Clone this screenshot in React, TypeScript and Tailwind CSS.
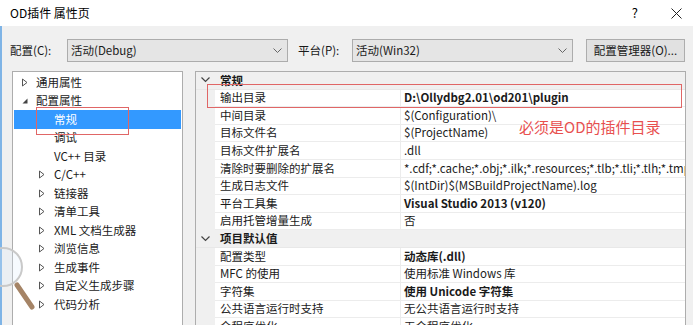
import React from "react";

type Prop = { name: string; value?: string; bold?: boolean; header?: boolean };

const props: Prop[] = [
  { name: "常规", header: true },
  { name: "输出目录", value: "D:\\Ollydbg2.01\\od201\\plugin", bold: true },
  { name: "中间目录", value: "$(Configuration)\\" },
  { name: "目标文件名", value: "$(ProjectName)" },
  { name: "目标文件扩展名", value: ".dll" },
  { name: "清除时要删除的扩展名", value: "*.cdf;*.cache;*.obj;*.ilk;*.resources;*.tlb;*.tli;*.tlh;*.tmp;*.rsp;*.pgc;*.pgd;$(TargetPath)" },
  { name: "生成日志文件", value: "$(IntDir)$(MSBuildProjectName).log" },
  { name: "平台工具集", value: "Visual Studio 2013 (v120)", bold: true },
  { name: "启用托管增量生成", value: "否" },
  { name: "项目默认值", header: true },
  { name: "配置类型", value: "动态库(.dll)", bold: true },
  { name: "MFC 的使用", value: "使用标准 Windows 库" },
  { name: "字符集", value: "使用 Unicode 字符集", bold: true },
  { name: "公共语言运行时支持", value: "无公共语言运行时支持" },
  { name: "全程序优化", value: "无全程序优化" },
];

type Node = { label: string; level: 0 | 1; arrow?: "open" | "closed"; selected?: boolean };

const tree: Node[] = [
  { label: "通用属性", level: 0, arrow: "closed" },
  { label: "配置属性", level: 0, arrow: "open" },
  { label: "常规", level: 1, selected: true },
  { label: "调试", level: 1 },
  { label: "VC++ 目录", level: 1 },
  { label: "C/C++", level: 1, arrow: "closed" },
  { label: "链接器", level: 1, arrow: "closed" },
  { label: "清单工具", level: 1, arrow: "closed" },
  { label: "XML 文档生成器", level: 1, arrow: "closed" },
  { label: "浏览信息", level: 1, arrow: "closed" },
  { label: "生成事件", level: 1, arrow: "closed" },
  { label: "自定义生成步骤", level: 1, arrow: "closed" },
  { label: "代码分析", level: 1, arrow: "closed" },
];

function Arrow({ kind }: { kind: "open" | "closed" }) {
  if (kind === "open") {
    return (
      <svg width="8" height="8" viewBox="0 0 8 8">
        <path d="M6.5 1.5 L6.5 6.5 L1.5 6.5 Z" fill="#444" />
      </svg>
    );
  }
  return (
    <svg width="8" height="9" viewBox="0 0 8 9">
      <path d="M1.5 1 L6 4.5 L1.5 8 Z" fill="none" stroke="#555" strokeWidth="1" />
    </svg>
  );
}

function Combo({ text, width }: { text: string; width: string }) {
  return (
    <div className={`${width} h-[23px] border border-[#acacac] bg-[#e5e5e5] flex items-center justify-between pl-[3px] pr-[5px]`}>
      <span>{text}</span>
      <svg width="9" height="6" viewBox="0 0 9 6">
        <path d="M0.5 0.5 L4.5 4.5 L8.5 0.5" fill="none" stroke="#666" strokeWidth="1" />
      </svg>
    </div>
  );
}

export default function App() {
  return (
    <div className="relative w-[693px] h-[325px] overflow-hidden bg-[#f0f0f0] text-[11.5px] text-[#1a1a1a] font-['Noto_Sans_CJK_SC',sans-serif]">
      {/* title bar */}
      <div className="h-[26px] bg-white flex items-center justify-between pl-[10px] pr-[11px]">
        <span className="text-[12px] text-black">OD插件 属性页</span>
        <div className="flex items-center gap-[33px] text-black">
          <span className="text-[13px]">?</span>
          <svg width="11" height="11" viewBox="0 0 11 11">
            <path d="M0.5 0.5 L10.5 10.5 M10.5 0.5 L0.5 10.5" stroke="#222" strokeWidth="1" />
          </svg>
        </div>
      </div>

      {/* config row */}
      <div className="flex items-center mt-[13px] pl-[10px]">
        <span className="w-[57px]">配置(C):</span>
        <Combo text="活动(Debug)" width="w-[221px]" />
        <span className="ml-[10px] w-[54px]">平台(P):</span>
        <Combo text="活动(Win32)" width="w-[221px]" />
        <div className="ml-[13px] w-[99px] h-[23px] border border-[#adadad] bg-[#e1e1e1] flex items-center justify-center">
          配置管理器(O)...
        </div>
      </div>

      {/* panels */}
      <div className="flex mt-[9px] pl-[12px] gap-[12px]">
        {/* tree */}
        <div className="w-[171px] h-[270px] bg-white border border-[#adadad] pt-[1px]">
          {tree.map((n) => (
            <div
              key={n.label}
              className={`h-[18.5px] ml-[1px] mr-[1px] flex items-center text-[11.5px] ${n.selected ? "bg-[#3399ff] text-white" : ""}`}
            >
              <div className={`flex items-center justify-center w-[8px] ${n.level === 0 ? "ml-[7px] mr-[7px]" : "ml-[24px] mr-[8px]"}`}>
                {n.arrow && <Arrow kind={n.arrow} />}
              </div>
              <span>{n.label}</span>
            </div>
          ))}
        </div>

        {/* property grid */}
        <div className="w-[491px] h-[270px] bg-white border border-[#adadad] overflow-hidden">
          {props.map((p) =>
            p.header ? (
              <div key={p.name} className="h-[17.6px] bg-[#f0f0f0] flex items-center border-b border-[#e8e8e8]">
                <div className="w-[19px] flex justify-center">
                  <svg width="9" height="6" viewBox="0 0 9 6">
                    <path d="M0.5 0.5 L4.5 4.5 L8.5 0.5" fill="none" stroke="#444" strokeWidth="1.2" />
                  </svg>
                </div>
                <span className="pl-[5px] font-bold">{p.name}</span>
              </div>
            ) : (
              <div key={p.name} className="h-[17.6px] flex">
                <div className="w-[19px] bg-[#f0f0f0]" />
                <div className="w-[186px] pl-[5px] flex items-center border-b border-r border-[#ececec] whitespace-nowrap">
                  {p.name}
                </div>
                <div className={`flex-1 pl-[3px] flex items-center border-b border-[#ececec] whitespace-nowrap overflow-hidden ${p.bold ? "font-bold" : ""}`}>
                  {p.value}
                </div>
              </div>
            )
          )}
        </div>
      </div>

      {/* annotations */}
      <div className="absolute left-[36px] top-[107px] w-[93px] h-[28px] border border-[#e06666]" />
      <div className="absolute left-[207px] top-[84px] w-[475px] h-[24px] border border-[#e06666]" />
      <div className="absolute left-[519px] top-[116px] text-[15px] text-[#e8504f]">必须是OD的插件目录</div>

      {/* window edge + magnifier */}
      <div className="absolute left-0 top-[26px] w-[2px] h-[299px] bg-[#7fb4e6]" />
      <svg className="absolute left-0 top-[244px]" width="40" height="70" viewBox="0 0 40 70">
        <circle cx="3" cy="23" r="19" fill="rgba(220,235,250,0.25)" stroke="#c9c9c9" strokeWidth="2" />
        <path d="M17 41 L32 63" stroke="#a58466" strokeWidth="5" strokeLinecap="round" />
      </svg>
    </div>
  );
}
